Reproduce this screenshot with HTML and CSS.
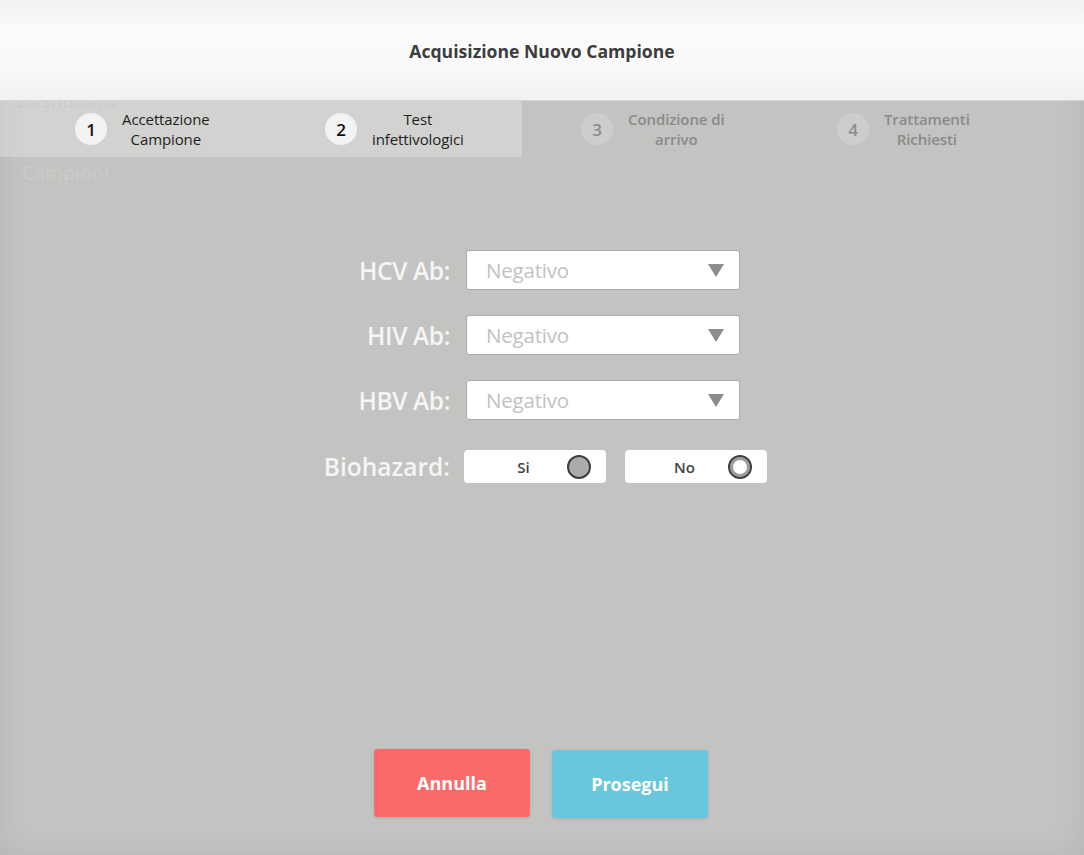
FILE: index.html
```html
<!DOCTYPE html>
<html lang="it">
<head>
<meta charset="utf-8">
<title>Acquisizione Nuovo Campione</title>
<link rel="stylesheet" href="styles.css">
</head>
<body>
<div class="modal">
  <div class="ghost ghost-dashboard">Dashboard</div>
  <div class="ghost ghost-campioni">Campioni</div>
  <header class="header">
    <h1 class="title">Acquisizione Nuovo Campione</h1>
  </header>
  <nav class="steps">
    <div class="step done">
      <span class="step-num">1</span>
      <span class="step-label">Accettazione<br>Campione</span>
    </div>
    <div class="step done">
      <span class="step-num">2</span>
      <span class="step-label">Test<br>infettivologici</span>
    </div>
    <div class="step">
      <span class="step-num">3</span>
      <span class="step-label">Condizione di<br>arrivo</span>
    </div>
    <div class="step">
      <span class="step-num">4</span>
      <span class="step-label">Trattamenti<br>Richiesti</span>
    </div>
  </nav>
  <main class="content">
    <div class="form">
      <label class="label">HCV Ab:</label>
      <div class="select"><span class="select-value">Negativo</span><span class="caret"></span></div>
      <label class="label">HIV Ab:</label>
      <div class="select"><span class="select-value">Negativo</span><span class="caret"></span></div>
      <label class="label">HBV Ab:</label>
      <div class="select"><span class="select-value">Negativo</span><span class="caret"></span></div>
      <label class="label label-bio">Biohazard:</label>
      <div class="toggles">
        <div class="toggle"><span class="toggle-text">Si</span><span class="radio radio-on"></span></div>
        <div class="toggle"><span class="toggle-text">No</span><span class="radio radio-off"></span></div>
      </div>
    </div>
  </main>
  <footer class="actions">
    <button class="btn btn-cancel">Annulla</button>
    <button class="btn btn-next">Prosegui</button>
  </footer>
</div>
</body>
</html>
```
FILE: styles.css
```css
* { box-sizing: border-box; }
html, body { margin: 0; padding: 0; }
body {
  width: 1084px;
  height: 855px;
  overflow: hidden;
  background: #c3c3c1;
  font-family: "Open Sans", "Noto Sans", sans-serif;
}
.modal {
  position: relative;
  height: 855px;
  display: flex;
  flex-direction: column;
  box-shadow: inset 0 0 30px rgba(0,0,0,0.07);
}
.ghost {
  position: absolute;
  z-index: 3;
  pointer-events: none;
  font-size: 19px;
  font-weight: 600;
  line-height: 24px;
}
.ghost-dashboard { left: 16px; top: 89px; color: rgba(0,0,0,0.035); }
.ghost-campioni { left: 22px; top: 161px; color: rgba(255,255,255,0.12); }
.header {
  height: 101px;
  background: linear-gradient(#f2f2f2 0px, #fbfbfb 30px, #f9f9f9 70px, #f1f1f1 100px);
  border-bottom: 1px solid #d6d6d4;
  display: flex;
  align-items: center;
  justify-content: center;
  position: relative;
  z-index: 4;
}
.title {
  margin: 0;
  font-size: 17.6px;
  font-weight: 700;
  color: #3d3d3d;
  padding-top: 2px;
}
.steps {
  height: 56px;
  display: grid;
  grid-template-columns: 250px 256px 256px 256px;
  padding-left: 75px;
  align-items: center;
  background: linear-gradient(to right, rgba(255,255,255,0.25) 522px, transparent 522px);
}
.step {
  display: flex;
  align-items: center;
  gap: 15px;
}
.step-num {
  width: 32px;
  height: 32px;
  border-radius: 50%;
  background: #cdcdcb;
  display: flex;
  align-items: center;
  justify-content: center;
  font-size: 17px;
  font-weight: 600;
  color: #8c8c8c;
  flex: none;
}
.step-label {
  font-size: 15px;
  line-height: 20px;
  font-weight: 600;
  text-align: center;
  color: #8a8a8a;
  letter-spacing: -0.1px;
}
.step.done .step-num { background: #f3f3f1; color: #111; }
.step.done .step-label { color: #1e1e1e; font-weight: 500; }
.content {
  flex: 1;
  padding-top: 93px;
}
.form {
  display: grid;
  grid-template-columns: 140px auto;
  justify-content: start;
  column-gap: 16px;
  row-gap: 25px;
  align-items: center;
  padding-left: 310px;
}
.label {
  text-align: right;
  font-size: 24.5px;
  font-weight: 600;
  color: #f5f5f5;
  letter-spacing: -0.4px;
  white-space: nowrap;
}
.label-bio { letter-spacing: 0; }
.select {
  width: 274px;
  height: 40px;
  background: #fff;
  border: 1px solid #a9a9a9;
  border-radius: 3px;
  display: flex;
  align-items: center;
  justify-content: space-between;
  padding: 0 15px 0 19px;
}
.select-value {
  font-size: 20.5px;
  color: #c2c2c2;
  letter-spacing: -0.2px;
}
.caret {
  width: 0;
  height: 0;
  border-left: 8px solid transparent;
  border-right: 8px solid transparent;
  border-top: 13px solid #8c8c8c;
}
.label-bio, .toggles { margin-top: 5px; }
.toggles {
  display: flex;
  gap: 19px;
  margin-left: -2px;
}
.toggle {
  width: 142px;
  height: 33px;
  background: #fff;
  border-radius: 4px;
  display: flex;
  align-items: center;
  padding: 0 15px 0 0;
}
.toggle-text {
  flex: 1;
  text-align: center;
  padding-left: 16px;
  font-size: 15px;
  font-weight: 600;
  color: #444;
}
.radio {
  width: 24px;
  height: 24px;
  border-radius: 50%;
  border: 2px solid #3f3f3f;
  flex: none;
}
.radio-on { background: #ababab; }
.radio-off { background: #fff; box-shadow: inset 0 0 0 3px #9c9c9c; }
.actions {
  display: flex;
  justify-content: center;
  gap: 22px;
  padding-bottom: 37px;
  padding-right: 2px;
}
.btn {
  width: 156px;
  height: 68px;
  border: none;
  border-radius: 3px;
  font-family: inherit;
  font-size: 18px;
  font-weight: 700;
  color: #fff;
  box-shadow: 0 1px 3px rgba(0,0,0,0.12);
}
.btn-cancel { background: #fc6b6b; margin-bottom: 1px; }
.btn-next { background: #68c7dc; margin-top: 1px; }
```
